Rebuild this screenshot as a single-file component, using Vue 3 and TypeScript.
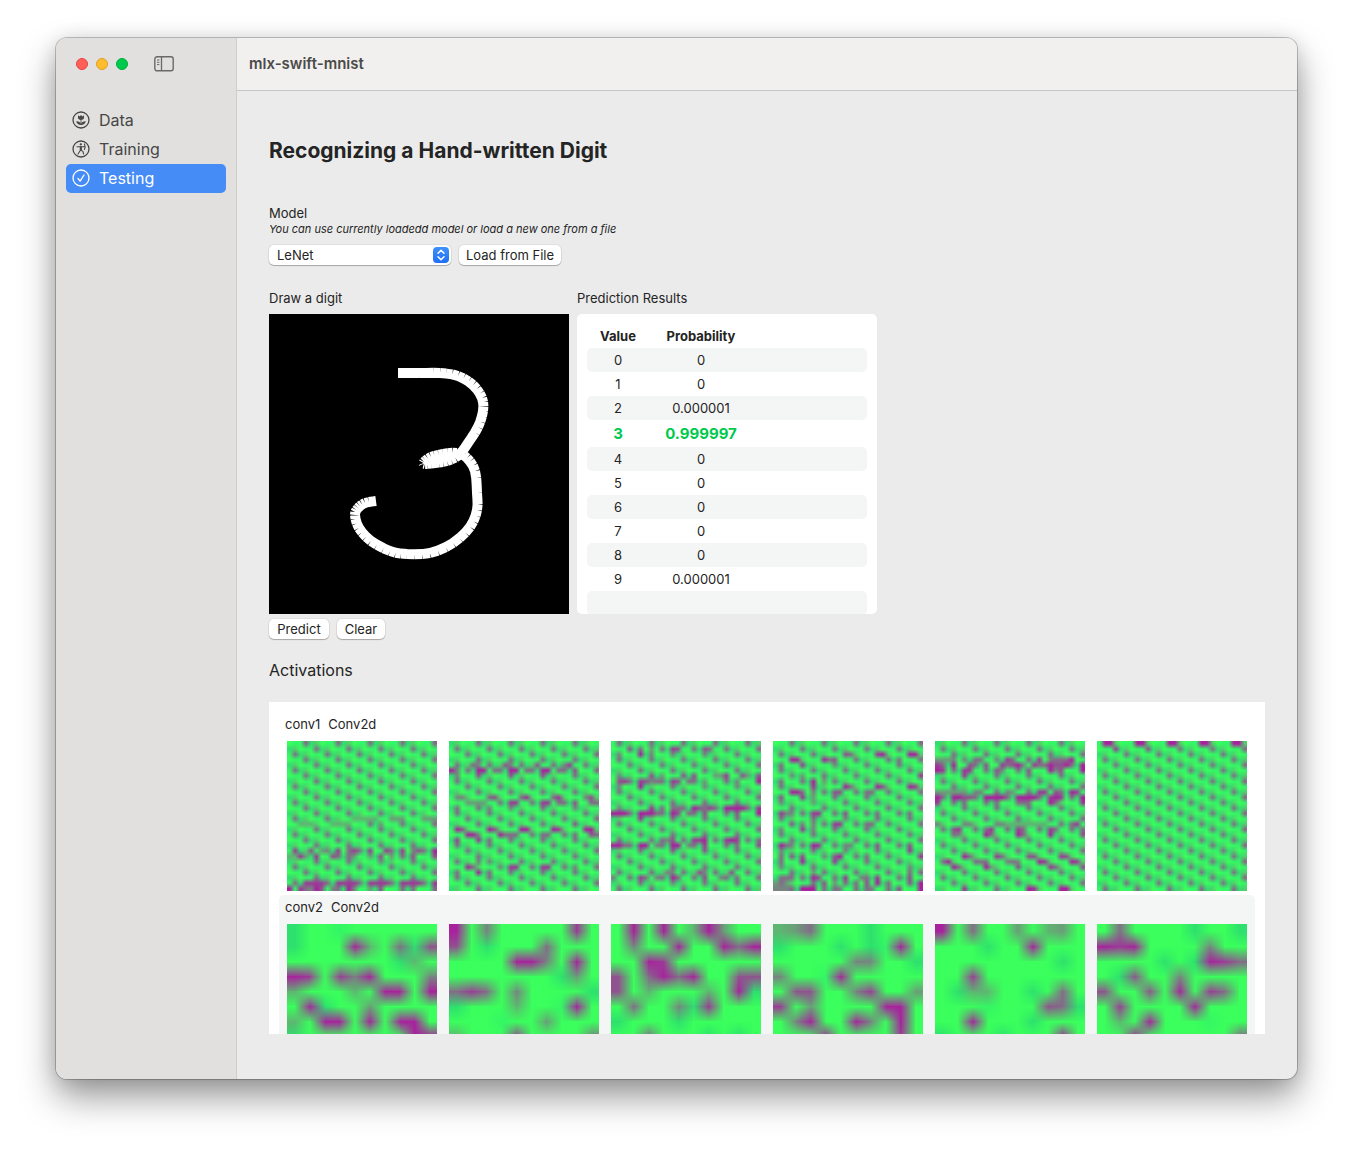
<script setup lang="ts">
import { computed, onMounted, ref } from 'vue'

type Point = [number, number]

interface Layer {
  name: string
  type: string
  size: number
  maps: string[][]
}

const models = ['LeNet', 'MLP']
const model = ref('LeNet')

const navItems = [
  { id: 'data', label: 'Data' },
  { id: 'training', label: 'Training' },
  { id: 'testing', label: 'Testing' },
]
const current = ref('testing')

const predictions = ['0', '0', '0.000001', '0.999997', '0', '0', '0', '0', '0', '0.000001']
const best = 3

// Pointer positions of the drawn digit, in drawing-area coordinates.
const samples: Point[] = [
  [129, 59], [150, 59], [171, 59], [189, 62], [204, 71], [213, 84], [214, 97], [209, 113],
  [199, 129], [190, 141], [178, 147], [166, 149], [156, 150], [155, 148], [162, 143], [174, 140],
  [188, 139], [198, 144], [206, 157], [208, 179], [208, 196], [201, 213], [184, 229], [161, 239],
  [138, 240], [121, 237], [102, 227], [90, 214], [86, 201], [89, 194], [96, 189], [107, 187],
]

// Catmull-Rom interpolation between the pointer positions.
function smooth(points: Point[], steps: number): Point[] {
  const out: Point[] = []
  for (let i = 0; i < points.length - 1; i++) {
    const a = points[Math.max(0, i - 1)]
    const b = points[i]
    const c = points[i + 1]
    const d = points[Math.min(points.length - 1, i + 2)]
    for (let s = 0; s < steps; s++) {
      const t = s / steps
      const at = (k: 0 | 1) =>
        0.5 * (2 * b[k] + (c[k] - a[k]) * t + (2 * a[k] - 5 * b[k] + 4 * c[k] - d[k]) * t * t +
          (3 * b[k] - a[k] - 3 * c[k] + d[k]) * t * t * t)
      out.push([at(0), at(1)])
    }
  }
  out.push(points[points.length - 1])
  return out
}

// Every segment is its own stroke, so the joints stay open on the outside of a bend.
const strokePath = computed(() => {
  const pts = smooth(samples, 3)
  return pts.slice(1).map((p, i) =>
    `M${pts[i][0].toFixed(1)} ${pts[i][1].toFixed(1)}L${p[0].toFixed(1)} ${p[1].toFixed(1)}`).join('')
})

// Builds a 28x28 map: a repeating lattice, then marks written as "row:col level,col level".
function lattice(phase: number, marks: string): string[] {
  const grid = Array.from({ length: 28 }, () => Array<string>(28).fill('.'))
  for (let r = 0; r < 28; r++) {
    for (let c = 0; c < 28; c++) {
      const half = Math.floor(c / 2)
      if (c % 2 === 1) {
        if (r % 3 === (half + phase) % 3) grid[r][c] = '6'
        else if (r % 3 === (half + phase + 2) % 3) grid[r][c] = '2'
        else grid[r][c] = 'a'
      } else if (r % 3 === (half + phase + 2) % 3) {
        grid[r][c] = 'b'
      } else if (r % 3 === (half + phase) % 3) {
        grid[r][c] = 'a'
      }
    }
  }
  for (const line of marks.trim().split(/\s+/)) {
    const [row, cells] = line.split(':')
    for (const cell of cells.split(',')) {
      const [span, level] = cell.split('=')
      const [from, to] = span.split('-').map(Number)
      for (let c = from; c <= (to ?? from); c++) grid[Number(row)][c] = level
    }
  }
  return grid.map((row) => row.join(''))
}

const layers: Layer[] = [
  {
    name: 'conv1',
    type: 'Conv2d',
    size: 28,
    maps: [
      lattice(2, `14:1=6,12-16=3,19-21=4,25-27=4 15:2-4=3,8-11=3,17=4 20:1=8,4=7,6=4,7=5,9=8,11=6,12=8,15=8,18=8,21=8,23=5,24=7,27=9
        21:0-1=3,2=8,3=4,5=8,8=7,11=6,12=4,15=4,17=7,19=4,23=7,27=7 22:5=6,11=6,17=5,23=6 26:3-6=8,9-12=8,15-18=8,21-24=8,27=8
        27:0=9,2=8,4=5,5=9,6=7,8=5,11=9,12=5,15=4,17=7,23=6,27=6`),
      lattice(1, `4:4=6,5=5,10=7,11=5,16=7,21=5,22=8 5:0=9,1=5,5-6=9,8=6,11-12=9,14=6,17-18=9,20=6,23=7 6:1=5,5=7,11=7,17=7,23=6
        10:1-2=5,7=6,8=7,13=6,14=8,19=6,20=8,25=5,26=7 11:3-6=4,9=6,11-12=8,17-18=8,20=6,23=7,26=6 12:1=6,5=6,7=5,11=5,17=6,23=5
        15:23=7 16:1=9,2=7,7=9,8=7,13-14=9,19=9,20=8,25-26=9 17:3-4=9,5=5,9=9,10-12=6,17-18=6,23=6,26=7 18:1=8,5=8,7=6,17=6
        19:1=6 22:1=6,5=5,7=5 23:3=9,4=6,9=5,11-12=8,17-18=8,23=5 24:1=6,5=9,7=6,11=6,17=6`),
      lattice(0, `1:3=7,5=6,7=4,11=8,12=7,17=7,18=6 2:1=5,5=9,7=5,11=5,17=5 6:1=5,7=7,9=4,13=7,15=7,19-20=4,21=8,24=7,25=4,27=7
        7:1=7,2=8,5=8,6=7,7=5,8=6,11=8,12=7,14=6,17=4,23=5,27=9 8:1=5,5=9,11=6,17=5,23=5 12:1=5,7=8,9=6,11-13=6,15=9,16=7,17=6,18=8,21-24=9,27=8
        13:0-2=9,5-7=9,8=6,11=9,12=7,14=6,17=7,23=7,27=9 14:5=8,11=6,17=6,23=6 18:1=6,9=6,10=5,11=7,15-16=8,17=9,21=8,22=9,23=8,27=6
        19:0-1=9,2=6,5-6=9,8=5,11-12=9,14=5,17=8,23=6,27=7 20:5=6,11=7,17=7,23=6 24:1=6,10=5,11=5,16=7,17=5,22=7
        25:0=5,5=8,6=6,8=5,11=9,12=6,17=7,20=5,23=6,27=6 26:5=6,11=5,17=6,23=6`),
      lattice(2, `2:7=6,13=7,14=6,19=8,20=9,25-26=9 3:3-4=9,9=9,10=6,11=7,23=6 4:1=6,5=8,11=5,17=6,23=6 5:1=6 6:3=5,5=4,15=6,21=6,27=8
        7:1=6,7=9,9=4 8:7=8,13=9,14=6,19=9,20=7,25=9,26=8 9:3-4=9,5=6,7=5,11-12=7,17-18=6 10:1=7,5=8,7=4,11=6,17=6,23=6 11:1=5,7=4
        13:1=8,2-3=5,7-8=8,13=7,19=6,25=6 14:1=6,7=6,13=5,19=6,25=6 15:3=7,5=5,7=5,11-12=8,17-18=6,27=6 16:1=5,5=8,7=5,11=6,17=6,23=6
        19:1=9,2=6,3=5,7=9,8=8,13-14=5,19=7,25=7 20:1=5,13=5,19=6,25=8 21:1=6,3=7,5=7,9=5,11=7,12=9,17=6,27=8 22:1=6,5=9,11=8,17=6,23=6
        23:1=5,25=5 24:7=4,25=6 25:1-3=6,7=9,8=7,13=8,16=5,19=8,25=7 26:0=4,1=6,2=4,9=7,11=4,13=6,15=6,17=7,19=9,21=6,25=7,27=9
        27:0-2=5,5-7=9,11=6,12=5,17=6,18=5,23=7,27=9`),
      lattice(1, `3:0-2=4,3=5,5=5,7-8=6,11=5,13=8,14=6,17=6,19=8,21=5,22-24=6,25=9 4:0=8,1=6,3=9,6=7,9=7,12=8,14=7,15=9,16=5,18=8,20=6,21=9,22-23=7,24=9,27=9
        5:0=9,1=8,5-6=8,11=7,12=5,17=7,21=9,22=5,23=7,27=9 6:5=8 9:0-5=4,7-8=5,13=5,14=4,19-20=8,22=7,25=9,26=8
        10:0=9,3-4=9,5-6=7,9-12=9,15-18=9,21=8,22=9,23=8,27=9 11:0=8,5=6,11=6,16-17=6,21=9,22=6,27=8 15:0=5,5-6=5,11-12=5,13-20=3,25=6,26=8
        16:3=7,4=8,9=6,10=8,15=8,16=6,21=8,22=6,27=6 17:3=6,4=5,9=9,10=6,15=9,16=6,21=9,27=7 21:5=9,6=6,11=8,12=6,17-18=7,23=8,24=7
        22:1=6,2=9,7-9=6,13=5,14=6,15=5,19=9,20=8,25=9,26=8 23:3=9,4=6,9=9,10=4,15=7,21=8,22=6,27=7 27:5=8,11=6,17=9,18=8,23-24=9`),
      lattice(0, `0:1-2=9,7-8=9,13-14=9,19-20=9,25-26=9 1:3=8,9=7,15=6,21=6,27=6`),
    ],
  },
  {
    name: 'conv2',
    type: 'Conv2d',
    size: 10,
    maps: [
      ['b..a......', 'b...93.6b7', '.......b3.', '98.859...5', '3...3.99.9', '.9b..4....', '3.99.9.99.', 'b.......99', '..........', '..........'],
      ['9.5.....8.', '7.b...6...', '....995.9.', '.......b4.', '686.5....b', 'b...3..a9.', '...a..4...', '3...8....5', '..........', '..........'],
      ['.9.9.394..', '.5..9..969', '..98......', '7.6969..77', '7.3...3.9b', '.6..5b8...', 'b...b.....', '..6...b.b.', '..........', '..........'],
      ['346...b...', 'b...b.ba9.', '.....55..b', '5..a9.....', '.77..58..4', '8.4....99.', '.59..95.9.', '...9....8.', '..........', '..........'],
      ['9.6..4.34.', '...b..9...', '........b.', '..8.......', '.b33..b.6.', '...a...76b', '..9...b...', 'b...b...9.', '..........', '..........'],
      ['.6....b..b', '989....5..', '....b.b986', '.b7..5....', '7..7.9.86.', '.8....9...', '.3.9...a..', '..9......6', '..........', '..........'],
    ],
  },
]

const LOW = [58, 255, 92]
const HIGH = [168, 34, 158]

function colour(level: string): number[] {
  if (level === 'a') return [52, 246, 102]
  if (level === 'b') return [46, 224, 110]
  const t = level === '.' ? 0 : Number(level) / 9
  return LOW.map((v, i) => Math.round(v + (HIGH[i] - v) * t))
}

const panel = ref<HTMLElement | null>(null)

onMounted(() => {
  panel.value?.querySelectorAll('canvas').forEach((canvas, index) => {
    const layer = layers[Math.floor(index / 6)]
    const rows = layer.maps[index % 6]
    const ctx = canvas.getContext('2d')
    if (!ctx) return
    const image = ctx.createImageData(layer.size, layer.size)
    rows.forEach((row, y) => {
      for (let x = 0; x < layer.size; x++) {
        image.data.set([...colour(row[x]), 255], (y * layer.size + x) * 4)
      }
    })
    ctx.putImageData(image, 0, 0)
  })
})
</script>

<template>
  <div class="window">
    <aside class="sidebar">
      <div class="controls">
        <button class="light red" aria-label="Close"></button>
        <button class="light yellow" aria-label="Minimize"></button>
        <button class="light green" aria-label="Zoom"></button>
        <button class="toggle" aria-label="Toggle sidebar">
          <svg width="20" height="16" viewBox="0 0 20 16" fill="none" stroke="#6a6967">
            <rect x="0.8" y="0.8" width="18.4" height="14" rx="2.2" stroke-width="1.4" />
            <path d="M7.5 1v14" stroke-width="1.3" />
            <path d="M3 4h2.4M3 6.3h2.4M3 8.6h2.4" stroke-width="1" />
          </svg>
        </button>
      </div>
      <nav class="nav">
        <a
          v-for="item in navItems"
          :key="item.id"
          :href="'#' + item.id"
          class="nav-item"
          :class="{ selected: item.id === current }"
          @click.prevent="current = item.id"
        >
          <svg class="nav-icon" viewBox="0 0 18 18" fill="none" stroke="currentColor" stroke-width="1.3" stroke-linecap="round" stroke-linejoin="round">
            <circle cx="9" cy="9" r="8" />
            <g v-if="item.id === 'data'" fill="currentColor" stroke="none">
              <path d="M6 4.4c.7.1 1.2.5 1.6 1L9 4.1l1.4 1.3c.4-.5.9-.9 1.6-1v2.3c0 1.400-1.200 2.200-3 2.200s-3-.8-3-2.200z" />
              <path d="M8.600 8.500h.8v4.500h-.8z" />
              <path d="M4.200 10.200c2.400-.2 4.100.8 4.800 2.700.7-1.900 2.400-2.900 4.800-2.700-.4 2.300-2.300 3.800-4.800 3.800s-4.400-1.500-4.800-3.800z" />
            </g>
            <g v-else-if="item.id === 'training'" stroke-width="1.100">
              <circle cx="8.800" cy="4.300" r=".6" fill="currentColor" />
              <path d="M5 6.700h7.200M8.600 10l-2.600 4M9 10l2 1.600.6 2.400M12.400 4c.9 1.800.9 3.600 0 5.400" />
              <path d="M8.300 6.800h1v3.200h-1z" fill="currentColor" />
            </g>
            <path v-else d="M6 9.500l2.100 2.600L12 6" />
          </svg>
          <span>{{ item.label }}</span>
        </a>
      </nav>
    </aside>

    <div class="main">
      <header class="toolbar">mlx-swift-mnist</header>
      <main class="content">
        <h1>Recognizing a Hand-written Digit</h1>

        <section class="model">
          <label for="model">Model</label>
          <p class="hint">You can use currently loadedd model or load a new one from a file</p>
          <div class="row">
            <div class="picker">
              <select id="model" v-model="model">
                <option v-for="m in models" :key="m">{{ m }}</option>
              </select>
              <span class="stepper">
                <svg width="16" height="16" viewBox="0 0 16 16" fill="none" stroke="#fff" stroke-width="1.5" stroke-linecap="round" stroke-linejoin="round">
                  <path d="M5 6.200L8 3.200l3 3M5 9.800l3 3 3-3" />
                </svg>
              </span>
            </div>
            <button class="btn load">Load from File</button>
          </div>
        </section>

        <section class="boards">
          <div class="board">
            <h2>Draw a digit</h2>
            <svg class="drawing" viewBox="0 0 300 300" role="img" aria-label="Drawn digit">
              <rect width="300" height="300" fill="#000" />
              <path :d="strokePath" fill="none" stroke="#fff" stroke-width="10" />
            </svg>
            <div class="row actions">
              <button class="btn predict">Predict</button>
              <button class="btn clear">Clear</button>
            </div>
          </div>
          <div class="board">
            <h2>Prediction Results</h2>
            <div class="results">
              <table>
                <thead>
                  <tr><th class="c-value">Value</th><th class="c-prob">Probability</th><th></th></tr>
                </thead>
                <tbody>
                  <tr v-for="(p, i) in predictions" :key="i" :class="{ best: i === best }">
                    <td>{{ i }}</td><td>{{ p }}</td><td></td>
                  </tr>
                  <tr><td></td><td></td><td></td></tr>
                </tbody>
              </table>
            </div>
          </div>
        </section>

        <h3>Activations</h3>
        <div ref="panel" class="activations">
          <section v-for="layer in layers" :key="layer.name" class="layer">
            <div class="layer-title"><span>{{ layer.name }}</span><span>{{ layer.type }}</span></div>
            <div class="maps">
              <canvas v-for="n in layer.maps.length" :key="n" :width="layer.size" :height="layer.size"></canvas>
            </div>
          </section>
        </div>
      </main>
    </div>
  </div>
</template>

<style>
body {
  margin: 0;
  background: #fff;
}
</style>

<style scoped>
* {
  box-sizing: border-box;
}
.window {
  display: flex;
  margin: 38px 56px 74px;
  min-height: calc(100vh - 112px);
  border-radius: 11px;
  overflow: hidden;
  background: #ebebeb;
  box-shadow: 0 0 0 1px rgba(0, 0, 0, 0.22), 0 18px 36px rgba(0, 0, 0, 0.4), 0 2px 20px rgba(0, 0, 0, 0.12);
  font-family: Inter, 'Liberation Sans', sans-serif;
  font-size: 13px;
  font-variant-ligatures: none;
  line-height: 16px;
  color: #242424;
}
button,
select {
  font: inherit;
  color: inherit;
  border: 0;
  margin: 0;
}
.sidebar {
  flex: 0 0 181px;
  background: #e1e0de;
  border-right: 1px solid #cfcecd;
}
.controls {
  display: flex;
  align-items: center;
  gap: 8px;
  height: 52px;
  padding-left: 20px;
}
.light {
  width: 12px;
  height: 12px;
  padding: 0;
  border-radius: 50%;
}
.red {
  background: #ff5f57;
  border: 1px solid #e2463f;
}
.yellow {
  background: #febc2e;
  border: 1px solid #dfa023;
}
.green {
  background: #00ca4e;
  border: 1px solid #00ac3a;
}
.toggle {
  display: flex;
  margin-left: 18px;
  padding: 0;
  background: none;
}
.nav {
  display: flex;
  flex-direction: column;
  padding: 16px 10px;
}
.nav-item {
  display: flex;
  align-items: center;
  gap: 9px;
  height: 29px;
  padding: 0 6px 2px;
  border-radius: 5px;
  font-size: 16px;
  color: #484746;
  text-decoration: none;
}
.nav-item.selected {
  background: #468cf7;
  color: #fff;
}
.nav-icon {
  width: 18px;
  height: 18px;
}
.main {
  flex: 1;
  min-width: 0;
}
.toolbar {
  height: 53px;
  padding-left: 12px;
  border-bottom: 1px solid #c6c5c5;
  background: #f1f0ee;
  font-size: 15px;
  font-weight: 600;
  line-height: 52px;
  color: #4b4a49;
}
.content {
  padding: 46px 32px 45px;
}
h1,
h2,
h3,
p {
  margin: 0;
  font-weight: 400;
}
h1 {
  font-size: 21px;
  font-weight: 700;
  line-height: 28px;
}
.model {
  margin-top: 40px;
}
.model label {
  display: block;
}
.hint {
  font-size: 11px;
  line-height: 16px;
  font-style: italic;
}
.row {
  display: flex;
  gap: 8px;
}
.model .row {
  margin-top: 8px;
}
.picker {
  position: relative;
  width: 182px;
}
.picker select {
  width: 100%;
  height: 20px;
  padding: 0 24px 1px 8px;
  appearance: none;
  border-radius: 5px;
  background: #fff;
  line-height: 18px;
  box-shadow: 0 0 0 1px rgba(0, 0, 0, 0.05), 0 1px 1px rgba(0, 0, 0, 0.25);
}
.stepper {
  position: absolute;
  top: 2px;
  right: 2px;
  width: 16px;
  height: 16px;
  border-radius: 4px;
  background: linear-gradient(#3f91fb, #1f6ff5);
  pointer-events: none;
}
.stepper svg {
  display: block;
}
.btn {
  height: 20px;
  padding: 0 0 1px;
  border-radius: 5px;
  background: #fff;
  line-height: 18px;
  white-space: nowrap;
  box-shadow: 0 0 0 1px rgba(0, 0, 0, 0.05), 0 1px 1px rgba(0, 0, 0, 0.25);
}
.load {
  width: 102px;
}
.predict {
  width: 60px;
}
.clear {
  width: 48px;
}
.boards {
  display: flex;
  gap: 8px;
  margin-top: 25px;
}
h2 {
  font-size: 13px;
  line-height: 16px;
}
.drawing,
.results {
  display: block;
  width: 300px;
  height: 300px;
  margin-top: 8px;
}
.results {
  padding: 10px 10px 0;
  border-radius: 5px;
  background: #fff;
  overflow: hidden;
}
.actions {
  margin-top: 5px;
}
table {
  width: 100%;
  table-layout: fixed;
  border-collapse: collapse;
}
th,
td {
  height: 24px;
  padding: 0;
  text-align: center;
}
th {
  font-weight: 700;
}
.c-value {
  width: 62px;
}
.c-prob {
  width: 104px;
}
tbody tr:nth-child(odd) td {
  background: #f4f5f5;
}
td:first-child {
  border-radius: 5px 0 0 5px;
}
td:last-child {
  border-radius: 0 5px 5px 0;
}
.best td {
  height: 27px;
  font-size: 15px;
  font-weight: 700;
  color: #00ca4e;
}
h3 {
  margin-top: 21px;
  font-size: 16px;
  line-height: 20px;
}
.activations {
  height: 332px;
  margin-top: 22px;
  padding: 10px;
  background: #fff;
  overflow: hidden;
}
.layer {
  height: 183px;
  padding: 4px 6px 0;
  border-radius: 5px;
}
.layer:nth-child(even) {
  background: #f4f5f5;
}
.layer-title {
  display: flex;
  gap: 8px;
  line-height: 16px;
}
.maps {
  display: flex;
  gap: 12px;
  margin-top: 9px;
  padding-left: 2px;
}
canvas {
  display: block;
  width: 150px;
  height: 150px;
}
</style>
